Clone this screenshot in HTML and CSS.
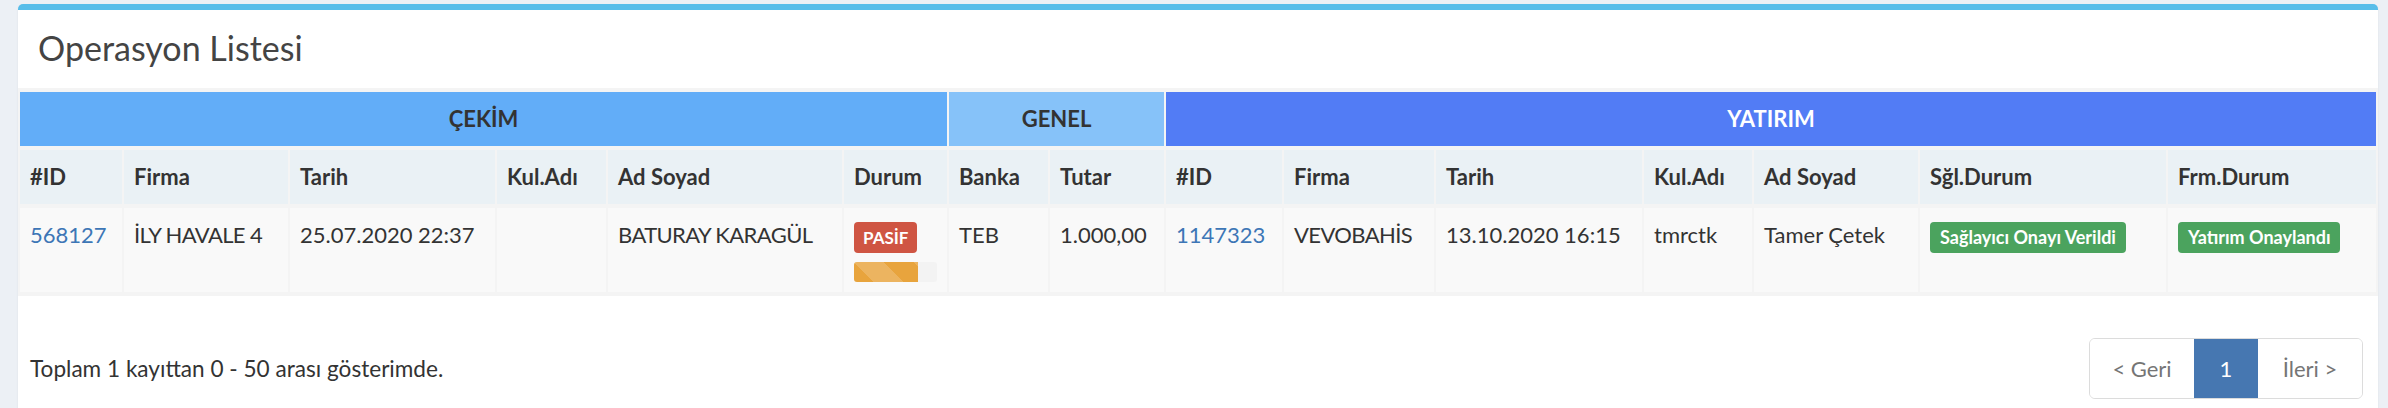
FILE: index.html
```html
<!DOCTYPE html>
<html lang="tr">
<head>
<meta charset="utf-8">
<title>Operasyon Listesi</title>
<link rel="stylesheet" href="styles.css">
</head>
<body>
<div class="box">
  <div class="box-header">
    <h3 class="box-title">Operasyon Listesi</h3>
  </div>
  <table class="ops">
    <colgroup>
      <col class="w102"><col class="w164"><col class="w205"><col class="w109"><col class="w234"><col class="w103"><col class="w99"><col class="w114"><col class="w116"><col class="w150"><col class="w206"><col class="w108"><col class="w164"><col class="w246"><col class="w208">
    </colgroup>
    <thead>
      <tr class="band">
        <th colspan="6" class="band-cekim">ÇEKİM</th>
        <th colspan="2" class="band-genel">GENEL</th>
        <th colspan="7" class="band-yatirim">YATIRIM</th>
      </tr>
      <tr class="head">
        <th>#ID</th><th>Firma</th><th>Tarih</th><th>Kul.Adı</th><th>Ad Soyad</th><th>Durum</th>
        <th>Banka</th><th>Tutar</th>
        <th>#ID</th><th>Firma</th><th>Tarih</th><th>Kul.Adı</th><th>Ad Soyad</th><th>Sğl.Durum</th><th>Frm.Durum</th>
      </tr>
    </thead>
    <tbody>
      <tr class="row">
        <td><a class="link" href="#">568127</a></td>
        <td class="caps">İLY HAVALE 4</td>
        <td>25.07.2020 22:37</td>
        <td></td>
        <td class="caps">BATURAY KARAGÜL</td>
        <td>
          <span class="label label-danger">PASİF</span>
          <div class="progress"><div class="progress-bar" style="width: 77%"></div></div>
        </td>
        <td>TEB</td>
        <td>1.000,00</td>
        <td><a class="link" href="#">1147323</a></td>
        <td class="caps">VEVOBAHİS</td>
        <td>13.10.2020 16:15</td>
        <td>tmrctk</td>
        <td>Tamer Çetek</td>
        <td><span class="label label-success">Sağlayıcı Onayı Verildi</span></td>
        <td><span class="label label-success">Yatırım Onaylandı</span></td>
      </tr>
    </tbody>
  </table>
  <div class="box-footer">
    <div class="info">Toplam 1 kayıttan 0 - 50 arası gösterimde.</div>
    <ul class="pager">
      <li class="pg pg-prev">&lt; Geri</li>
      <li class="pg pg-active">1</li>
      <li class="pg pg-next">İleri &gt;</li>
    </ul>
  </div>
</div>
</body>
</html>
```
FILE: styles.css
```css
* { box-sizing: border-box; }
html, body { margin: 0; padding: 0; }
body {
  background: #ecf0f5;
  font-family: Lato, "Liberation Sans", sans-serif;
  color: #333;
  overflow: hidden;
}
.box {
  margin: 4px 10px 0 18px;
  width: 2360px;
  min-height: 420px;
  background: #fff;
  border-top: 6px solid #57bde9;
  border-radius: 5px 5px 0 0;
  box-shadow: 0 1px 2px rgba(0,0,0,0.08);
}
.box-header {
  height: 78px;
  display: flex;
  align-items: center;
  padding-left: 20px;
}
.box-title {
  margin: 0 0 2px 0;
  font-weight: 400;
  font-size: 34px;
  line-height: 1.2;
  color: #444;
}
.ops {
  width: 2360px;
  table-layout: fixed;
  border-collapse: separate;
  border-spacing: 2px 4px;
  background: #f4f4f4;
  font-size: 22px;
  line-height: 34px;
}
.w102 { width: 102px; } .w164 { width: 164px; } .w205 { width: 205px; }
.w109 { width: 109px; } .w234 { width: 234px; } .w103 { width: 103px; }
.w99 { width: 99px; } .w114 { width: 114px; } .w116 { width: 116px; }
.w150 { width: 150px; } .w206 { width: 206px; } .w108 { width: 108px; }
.w246 { width: 246px; } .w208 { width: 208px; }
.ops th, .ops td {
  padding: 10px 10px;
  text-align: left;
  vertical-align: top;
  white-space: nowrap;
  overflow: hidden;
}
.band th {
  text-align: center;
  font-weight: 700;
  color: #333;
}
.band-cekim { background: #62adf8; }
.band-genel { background: #86c2f9; }
.band-yatirim { background: #527cf5; color: #fff !important; }
.head th {
  background: #eaf1f5;
  font-weight: 700;
  color: #333;
}
.row td {
  background: #f9f9f9;
  color: #333;
}
.row td.caps { letter-spacing: -0.6px; }
.link { color: #3d76b6; text-decoration: none; }
.label {
  display: inline-block;
  height: 31px;
  line-height: 31px;
  padding: 0 10px;
  border-radius: 4px;
  color: #fff;
  font-weight: 700;
  font-size: 18px;
  vertical-align: middle;
}
.label-danger { background: #cf5543; padding: 0 9px; font-size: 17px; }
.label-success { background: #4ba35e; }
.progress {
  margin-top: 9px;
  height: 20px;
  background: #f3f3f3;
  border-radius: 3px;
  overflow: hidden;
}
.progress-bar {
  height: 100%;
  background-color: #e8a43d;
  background-image: linear-gradient(45deg, rgba(255,255,255,.18) 25%, transparent 25%, transparent 50%, rgba(255,255,255,.18) 50%, rgba(255,255,255,.18) 75%, transparent 75%, transparent);
  background-size: 60px 60px;
}
.box-footer {
  display: flex;
  align-items: center;
  justify-content: space-between;
  padding: 42px 15px 10px 12px;
}
.info {
  font-size: 22.6px;
  color: #333;
}
.pager {
  display: flex;
  margin: 0;
  padding: 0;
  list-style: none;
  border: 1px solid #dcdcdc;
  border-radius: 6px;
  height: 61px;
  overflow: hidden;
}
.pg {
  height: 59px;
  line-height: 59px;
  text-align: center;
  font-size: 22px;
  color: #757575;
  background: #fff;
}
.pg-prev, .pg-next { width: 104px; }
.pg-active { width: 64px; background: #4677b1; color: #fff; }
```
